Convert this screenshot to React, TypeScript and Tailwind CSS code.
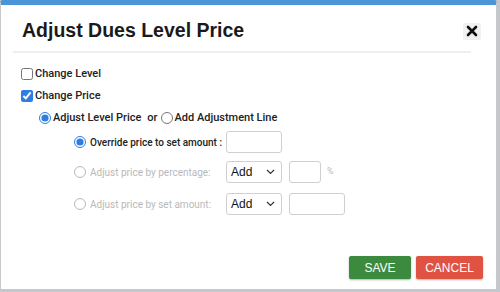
import React, { useState } from "react";

const font = { fontFamily: '"Liberation Sans", Arial, sans-serif' };
const bodyFont = { fontFamily: 'Roboto, "Liberation Sans", Arial, sans-serif' };

export default function App() {
  const [changeLevel, setChangeLevel] = useState(false);
  const [changePrice, setChangePrice] = useState(true);
  const [mode, setMode] = useState("level");
  const [sub, setSub] = useState("override");

  return (
    <div className="w-[500px] h-[292px] bg-[#c3c8ce] overflow-hidden" style={font}>
      <div className="w-[497px] h-[289px] bg-white border-l border-r border-[#c9c9c9] border-t-[5px] border-t-[#4a94d8] rounded-t-[3px] flex flex-col">
        {/* header */}
        <div className="h-[46px] pt-[6px] flex items-center justify-between pl-[21px] pr-[15px]">
          <h1 className="text-[19.5px] font-bold text-[#1a1a1a]">Adjust Dues Level Price</h1>
          <button className="w-[18px] h-[17px] bg-[#f1f1f1] rounded-[2px] flex items-center justify-center">
            <svg width="12" height="12" viewBox="0 0 12 12">
              <path d="M2 2 L10 10 M10 2 L2 10" stroke="#111" strokeWidth="2.6" strokeLinecap="round" />
            </svg>
          </button>
        </div>
        <div className="h-[2px] bg-[#efefef] ml-[12px] mr-[25px]" />

        {/* body */}
        <div className="flex flex-col pl-[20px] pt-[13px] text-[11px] text-[#222] font-medium" style={bodyFont}>
          <label className="flex items-center h-[16px] whitespace-nowrap">
            <input type="checkbox" checked={changeLevel} onChange={e => setChangeLevel(e.target.checked)} className="w-[12px] h-[12px] m-0 accent-[#2f7de1]" />
            <span className="ml-[2px]">Change Level</span>
          </label>
          <label className="flex items-center h-[16px] mt-[6px] whitespace-nowrap">
            <input type="checkbox" checked={changePrice} onChange={e => setChangePrice(e.target.checked)} className="w-[12px] h-[12px] m-0 accent-[#2f7de1]" />
            <span className="ml-[2px]">Change Price</span>
          </label>

          <div className="flex items-center h-[16px] mt-[6px] ml-[18px] whitespace-nowrap">
            <input type="radio" name="mode" checked={mode === "level"} onChange={() => setMode("level")} className="w-[12px] h-[12px] m-0 accent-[#2f7de1]" />
            <span className="ml-[2px]">Adjust Level Price</span>
            <span className="ml-[6px]">or</span>
            <input type="radio" name="mode" checked={mode === "line"} onChange={() => setMode("line")} className="w-[12px] h-[12px] m-0 ml-[3px] accent-[#2f7de1]" />
            <span className="ml-[2px]">Add Adjustment Line</span>
          </div>

          <div className="ml-[53px] flex flex-col text-[10px] whitespace-nowrap">
            <div className="flex items-center h-[22px] mt-[5px]">
              <input type="radio" name="sub" checked={sub === "override"} onChange={() => setSub("override")} className="w-[12px] h-[12px] m-0 accent-[#2f7de1]" />
              <span className="ml-[4px] w-[136px] text-[#222]">Override price to set amount :</span>
              <input className="w-[56px] h-[22px] border border-[#cfcfcf] rounded-[3px]" />
            </div>
            <div className="flex items-center h-[22px] mt-[8px]">
              <input type="radio" name="sub" checked={sub === "pct"} onChange={() => setSub("pct")} className="w-[12px] h-[12px] m-0 opacity-50" />
              <span className="ml-[4px] w-[136px] font-normal text-[#b9b9b9]">Adjust price by percentage:</span>
              <Select />
              <input className="w-[32px] h-[22px] border border-[#cfcfcf] rounded-[3px] ml-[7px]" />
              <span className="ml-[6px] font-normal text-[9px] text-[#b9b9b9]">%</span>
            </div>
            <div className="flex items-center h-[22px] mt-[10px]">
              <input type="radio" name="sub" checked={sub === "amt"} onChange={() => setSub("amt")} className="w-[12px] h-[12px] m-0 opacity-50" />
              <span className="ml-[4px] w-[136px] font-normal text-[#b9b9b9]">Adjust price by set amount:</span>
              <Select />
              <input className="w-[56px] h-[22px] border border-[#cfcfcf] rounded-[3px] ml-[7px]" />
            </div>
          </div>
        </div>

        {/* footer */}
        <div className="mt-auto flex justify-end gap-[5px] pr-[13px] pb-[10px]">
          <button className="w-[62px] h-[23px] rounded-[2px] bg-[#3c8a3e] text-white text-[12px] shadow-[0_1px_2px_rgba(0,0,0,0.3)]">SAVE</button>
          <button className="w-[67px] h-[23px] rounded-[2px] bg-[#e05241] text-white text-[12px] shadow-[0_1px_2px_rgba(0,0,0,0.3)]">CANCEL</button>
        </div>
      </div>
    </div>
  );
}

function Select() {
  return (
    <div className="w-[56px] h-[22px] border border-[#cfcfcf] rounded-[3px] flex items-center justify-between pl-[4px] pr-[6px] text-[12px] font-normal text-[#111]" style={font}>
      <span>Add</span>
      <svg width="9" height="6" viewBox="0 0 9 6">
        <path d="M1 1 L4.5 4.5 L8 1" stroke="#333" strokeWidth="1.2" fill="none" />
      </svg>
    </div>
  );
}
